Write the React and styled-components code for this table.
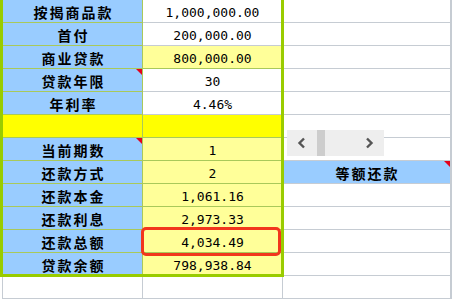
import React from 'react';
import styled, { createGlobalStyle, css } from 'styled-components';

const GlobalStyle = createGlobalStyle`
  html, body {
    margin: 0;
    padding: 0;
    background: #ffffff;
    overflow: hidden;
  }
`;

const colors = {
  blue: '#99ccff',
  paleYellow: '#ffff99',
  yellow: '#ffff00',
  white: '#ffffff',
  green: '#99cc00',
  innerLine: '#a9c95a',
  grid: '#c6ccd3',
  red: '#f2361c',
};

const Sheet = styled.div`
  position: relative;
  display: grid;
  grid-template-columns: 141px 140px 168px 1fr;
  grid-auto-rows: 23px;
  padding-left: 2px;
  width: 452px;
  height: 299px;
  box-sizing: border-box;
`;

const Cell = styled.div`
  position: relative;
  box-sizing: border-box;
  display: flex;
  align-items: center;
  justify-content: center;
  padding-top: 2px;
  background: ${(p) => p.$bg || colors.white};
  border-right: 1px solid ${(p) => p.$line || colors.grid};
  border-bottom: 1px solid ${(p) => p.$line || colors.grid};
  ${(p) => p.$first && css`border-left: 1px solid ${colors.grid};`}
  color: #000;
  white-space: nowrap;

  ${(p) =>
    p.$label
      ? css`
          font-family: 'Noto Sans CJK SC', 'Noto Sans', sans-serif;
          font-weight: 700;
          font-size: 14px;
          letter-spacing: 2px;
          text-indent: 2px;
        `
      : css`
          font-family: 'DejaVu Sans Mono', 'Liberation Mono', monospace;
          font-size: 13px;
        `}

  ${(p) =>
    p.$note &&
    css`
      &::after {
        content: '';
        position: absolute;
        top: 0;
        right: 0;
        border-top: 6px solid #e3001b;
        border-left: 6px solid transparent;
      }
    `}
`;

const RangeBorder = styled.div`
  position: absolute;
  left: 0;
  top: -3px;
  width: 284px;
  height: 280px;
  box-sizing: border-box;
  border: 3px solid ${colors.green};
  pointer-events: none;
`;

const Highlight = styled.div`
  position: absolute;
  left: 141px;
  top: 227px;
  width: 140px;
  height: 29px;
  box-sizing: border-box;
  border: 3px solid ${colors.red};
  border-radius: 5px;
  pointer-events: none;
`;

const ScrollBar = styled.div`
  position: absolute;
  left: 287px;
  top: 130px;
  width: 97px;
  height: 26px;
  background: #eeeeee;
  display: flex;
  align-items: center;
`;

const Arrow = styled.svg`
  width: 12px;
  height: 12px;
  margin: 0 ${(p) => p.$gap}px;
`;

const Thumb = styled.div`
  width: 8px;
  align-self: stretch;
  background: #cdcdcd;
  margin-right: auto;
`;

const rows = [
  { label: '按揭商品款', value: '1,000,000.00' },
  { label: '首付', value: '200,000.00' },
  { label: '商业贷款', value: '800,000.00', bg: colors.paleYellow },
  { label: '贷款年限', value: '30', note: true },
  { label: '年利率', value: '4.46%' },
  { label: '', value: '', bg: colors.yellow, labelBg: colors.yellow },
  { label: '当前期数', value: '1', bg: colors.paleYellow, note: true },
  { label: '还款方式', value: '2', bg: colors.paleYellow, side: '等额还款' },
  { label: '还款本金', value: '1,061.16', bg: colors.paleYellow },
  { label: '还款利息', value: '2,973.33', bg: colors.paleYellow },
  { label: '还款总额', value: '4,034.49', bg: colors.paleYellow },
  { label: '贷款余额', value: '798,938.84', bg: colors.paleYellow },
];

export default function App() {
  return (
    <>
      <GlobalStyle />
      <Sheet>
        {rows.map((r, i) => (
          <React.Fragment key={i}>
            <Cell $first $label $bg={r.labelBg || colors.blue} $line={colors.innerLine} $note={r.note}>
              {r.label}
            </Cell>
            <Cell $bg={r.bg} $line={r.bg ? colors.innerLine : colors.grid}>
              {r.value}
            </Cell>
            {r.side ? (
              <Cell $label $bg={colors.blue} $note>
                {r.side}
              </Cell>
            ) : (
              <Cell />
            )}
            <Cell />
          </React.Fragment>
        ))}
        <Cell $first />
        <Cell />
        <Cell />
        <Cell />

        <RangeBorder />
        <Highlight />
        <ScrollBar>
          <Arrow $gap={9} viewBox="0 0 12 12">
            <polyline points="8,1.5 3.5,6 8,10.5" fill="none" stroke="#555" strokeWidth="2.4" />
          </Arrow>
          <Thumb />
          <Arrow $gap={9} viewBox="0 0 12 12">
            <polyline points="4,1.5 8.5,6 4,10.5" fill="none" stroke="#555" strokeWidth="2.4" />
          </Arrow>
        </ScrollBar>
      </Sheet>
    </>
  );
}
